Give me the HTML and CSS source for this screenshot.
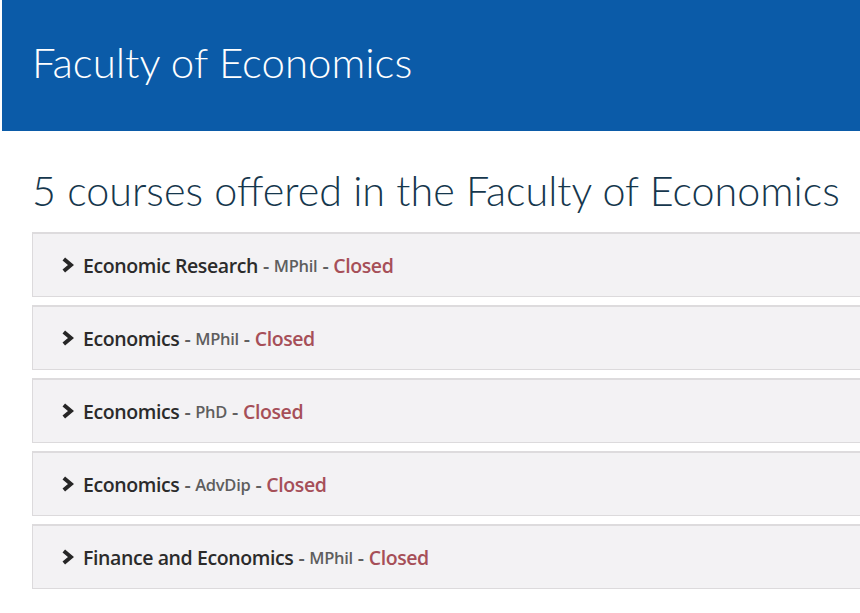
FILE: index.html
```html
<!DOCTYPE html>
<html lang="en">
<head>
<meta charset="utf-8">
<title>Faculty of Economics</title>
<link rel="stylesheet" href="styles.css">
</head>
<body>
<header class="banner">
  <h1 class="banner-title">Faculty of Economics</h1>
</header>
<main class="content">
  <h2 class="count-title">5 courses offered in the Faculty of Economics</h2>
  <ul class="course-list">
    <li class="course">
      <svg class="chev" viewBox="0 0 13 16" width="13" height="16"><polyline points="2.8,2 10,8 2.8,14" fill="none" stroke="#262626" stroke-width="4" stroke-linejoin="miter"/></svg>
      <span class="name">Economic Research</span><span class="sep">-</span><span class="deg">MPhil</span><span class="sep">-</span><span class="status">Closed</span>
    </li>
    <li class="course">
      <svg class="chev" viewBox="0 0 13 16" width="13" height="16"><polyline points="2.8,2 10,8 2.8,14" fill="none" stroke="#262626" stroke-width="4" stroke-linejoin="miter"/></svg>
      <span class="name">Economics</span><span class="sep">-</span><span class="deg">MPhil</span><span class="sep">-</span><span class="status">Closed</span>
    </li>
    <li class="course">
      <svg class="chev" viewBox="0 0 13 16" width="13" height="16"><polyline points="2.8,2 10,8 2.8,14" fill="none" stroke="#262626" stroke-width="4" stroke-linejoin="miter"/></svg>
      <span class="name">Economics</span><span class="sep">-</span><span class="deg">PhD</span><span class="sep">-</span><span class="status">Closed</span>
    </li>
    <li class="course">
      <svg class="chev" viewBox="0 0 13 16" width="13" height="16"><polyline points="2.8,2 10,8 2.8,14" fill="none" stroke="#262626" stroke-width="4" stroke-linejoin="miter"/></svg>
      <span class="name">Economics</span><span class="sep">-</span><span class="deg">AdvDip</span><span class="sep">-</span><span class="status">Closed</span>
    </li>
    <li class="course">
      <svg class="chev" viewBox="0 0 13 16" width="13" height="16"><polyline points="2.8,2 10,8 2.8,14" fill="none" stroke="#262626" stroke-width="4" stroke-linejoin="miter"/></svg>
      <span class="name">Finance and Economics</span><span class="sep">-</span><span class="deg">MPhil</span><span class="sep">-</span><span class="status">Closed</span>
    </li>
  </ul>
</main>
</body>
</html>
```
FILE: styles.css
```css
html, body {
  margin: 0;
  padding: 0;
  background: #ffffff;
  overflow: hidden;
}
body {
  width: 860px;
  font-family: "Open Sans", "Liberation Sans", sans-serif;
}
.banner {
  height: 131px;
  background: #0b5ba8;
  border-left: 2px solid #ffffff;
  box-sizing: border-box;
  display: flex;
  align-items: flex-start;
  padding: 36px 0 0 30px;
}
.banner-title {
  margin: 0;
  font-family: "Lato", sans-serif;
  font-weight: 300;
  font-size: 42px;
  line-height: 52px;
  color: #ffffff;
}
.content {
  padding: 33px 0 0 32px;
  margin-right: -40px;
}
.count-title {
  margin: 0 0 15px 0;
  font-family: "Lato", sans-serif;
  font-weight: 300;
  font-size: 41.3px;
  line-height: 53px;
  color: #16374d;
}
.course-list {
  list-style: none;
  margin: 0;
  padding: 0;
  display: flex;
  flex-direction: column;
  gap: 8px;
}
.course {
  height: 65px;
  box-sizing: border-box;
  background: #f3f2f4;
  border: 1px solid #dcdadc;
  border-top: 2px solid #dddbdd;
  display: flex;
  align-items: center;
  padding-left: 28px;
  font-size: 19.5px;
  font-weight: 600;
  letter-spacing: -0.4px;
}
.chev {
  margin-right: 9px;
}
.name {
  color: #2b2b2b;
}
.sep {
  color: #606060;
  margin: 0 5px;
}
.deg {
  color: #5e5e5e;
  font-size: 16.5px;
  letter-spacing: -0.3px;
}
.status {
  color: #a64f58;
}
```
